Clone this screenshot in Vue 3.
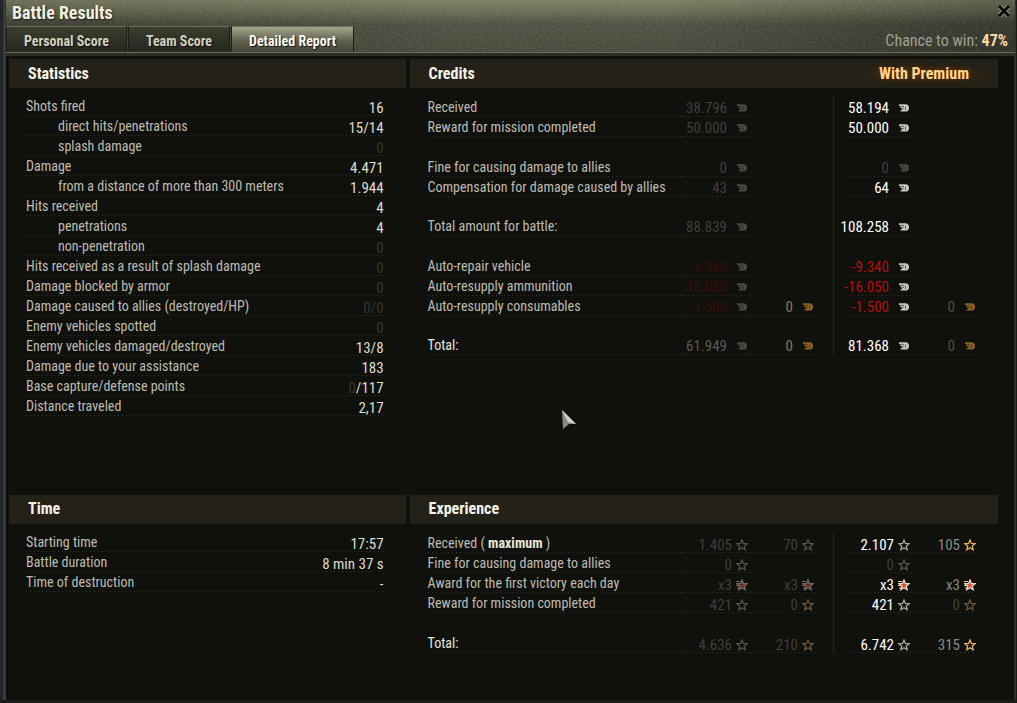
<script setup>
const tabs = [
  { id: 'personal', label: 'Personal Score' },
  { id: 'team', label: 'Team Score' },
  { id: 'detailed', label: 'Detailed Report' },
]
const activeTab = 'detailed'

const statistics = [
  { label: 'Shots fired', value: '16' },
  { label: 'direct hits/penetrations', value: '15/14', sub: true },
  { label: 'splash damage', dim: '0', sub: true },
  { label: 'Damage', value: '4.471' },
  { label: 'from a distance of more than 300 meters', value: '1.944', sub: true },
  { label: 'Hits received', value: '4' },
  { label: 'penetrations', value: '4', sub: true },
  { label: 'non-penetration', dim: '0', sub: true },
  { label: 'Hits received as a result of splash damage', dim: '0' },
  { label: 'Damage blocked by armor', dim: '0' },
  { label: 'Damage caused to allies (destroyed/HP)', dim: '0/0' },
  { label: 'Enemy vehicles spotted', dim: '0' },
  { label: 'Enemy vehicles damaged/destroyed', value: '13/8' },
  { label: 'Damage due to your assistance', value: '183' },
  { label: 'Base capture/defense points', dim: '0', value: '/117' },
  { label: 'Distance traveled', value: '2,17' },
]

const time = [
  { label: 'Starting time', value: '17:57' },
  { label: 'Battle duration', value: '8 min 37 s' },
  { label: 'Time of destruction', value: '-' },
]

const c = (text, tone, icon) => ({ text, tone, icon })

const credits = [
  { label: 'Received', cells: [c('38.796', 'faded', 'coin'), null, c('58.194', 'bright', 'coin'), null] },
  { label: 'Reward for mission completed', cells: [c('50.000', 'faded', 'coin'), null, c('50.000', 'bright', 'coin'), null] },
  { gap: 'group' },
  { label: 'Fine for causing damage to allies', cells: [c('0', 'faded', 'coin'), null, c('0', 'faded', 'coin'), null] },
  { label: 'Compensation for damage caused by allies', cells: [c('43', 'faded', 'coin'), null, c('64', 'bright', 'coin'), null] },
  { gap: 'total' },
  { label: 'Total amount for battle:', cells: [c('88.839', 'faded', 'coin'), null, c('108.258', 'bright', 'coin'), null] },
  { gap: 'group' },
  { label: 'Auto-repair vehicle', cells: [c('-9.340', 'loss-faded', 'coin'), null, c('-9.340', 'loss', 'coin'), null] },
  { label: 'Auto-resupply ammunition', cells: [c('-16.050', 'loss-faded', 'coin'), null, c('-16.050', 'loss', 'coin'), null] },
  { label: 'Auto-resupply consumables', cells: [c('-1.500', 'loss-faded', 'coin'), c('0', 'gold', 'gold-coin'), c('-1.500', 'loss', 'coin'), c('0', 'gold-faded', 'gold-coin')] },
  { gap: 'total' },
  { label: 'Total:', strong: true, cells: [c('61.949', 'muted', 'coin'), c('0', 'gold', 'gold-coin'), c('81.368', 'bright', 'coin'), c('0', 'gold-faded', 'gold-coin')] },
]

const experience = [
  { label: 'Received ( ', em: 'maximum', tail: ' )', cells: [c('1.405', 'faded', 'star'), c('70', 'faded', 'star'), c('2.107', 'bright', 'star'), c('105', 'plain', 'gold-star')] },
  { label: 'Fine for causing damage to allies', cells: [c('0', 'faded', 'star'), null, c('0', 'faded', 'star'), null] },
  { label: 'Award for the first victory each day', cells: [c('x3', 'faded', 'red-star'), c('x3', 'faded', 'red-star'), c('x3', 'bright', 'red-star'), c('x3', 'plain', 'red-star')] },
  { label: 'Reward for mission completed', cells: [c('421', 'faded', 'star'), c('0', 'faded', 'gold-star'), c('421', 'bright', 'star'), c('0', 'faded', 'gold-star')] },
  { gap: 'group' },
  { label: 'Total:', strong: true, cells: [c('4.636', 'faded', 'star'), c('210', 'faded', 'gold-star'), c('6.742', 'bright', 'star'), c('315', 'plain', 'gold-star')] },
]

const panels = [
  { title: 'Statistics', rows: statistics },
  { title: 'Credits', note: 'With Premium', kind: 'credits', rows: credits },
  { title: 'Time', rows: time },
  { title: 'Experience', kind: 'experience', rows: experience },
]
</script>

<template>
  <main class="window">
    <header class="top">
      <svg class="grain" aria-hidden="true">
        <filter id="brushed">
          <feTurbulence type="fractalNoise" baseFrequency="0.3 0.5" numOctaves="3" seed="4" />
          <feColorMatrix values="0 0 0 0 0.8  0 0 0 0 0.8  0 0 0 0 0.65  1.4 0 0 0 -0.45" />
        </filter>
        <rect width="100%" height="100%" filter="url(#brushed)" />
      </svg>
      <div class="titlebar">
        <h1>Battle Results</h1>
        <button class="close" type="button" aria-label="Close">
          <svg viewBox="0 0 14 14" width="14" height="14">
            <path d="M2.5 2.5 L11.5 11.5 M11.5 2.5 L2.5 11.5" stroke="#8f907e" stroke-width="5" />
            <path d="M2 2 L12 12 M12 2 L2 12" stroke="#0c0c08" stroke-width="3" />
          </svg>
        </button>
      </div>
      <div class="tabbar">
        <nav class="tabs">
          <button
            v-for="t in tabs"
            :key="t.id"
            type="button"
            class="tab"
            :class="{ active: t.id === activeTab }"
          >{{ t.label }}</button>
        </nav>
        <p class="chance">Chance to win: <strong>47%</strong></p>
      </div>
    </header>

    <div class="report">
      <section v-for="p in panels" :key="p.title" class="panel">
        <div class="panel-head">
          <h2>{{ p.title }}</h2>
          <span v-if="p.note" class="premium">{{ p.note }}</span>
        </div>

        <table v-if="!p.kind" class="stats">
          <tbody>
            <tr v-for="r in p.rows" :key="r.label" class="dotted">
              <th scope="row" :class="{ sub: r.sub }">{{ r.label }}</th>
              <td><span v-if="r.dim" class="dim">{{ r.dim }}</span>{{ r.value }}</td>
            </tr>
          </tbody>
        </table>

        <table v-else class="ledger" :class="p.kind">
          <colgroup>
            <col />
            <col class="w-main" />
            <col class="w-gold" />
            <col class="w-split" />
            <col class="w-prem" />
            <col class="w-gold" />
          </colgroup>
          <tbody>
            <tr v-for="(r, i) in p.rows" :key="i" :class="r.gap ? 'gap-' + r.gap : ''">
              <template v-if="r.gap">
                <td colspan="3"></td>
                <td class="split"></td>
                <td colspan="2"></td>
              </template>
              <template v-else>
                <th scope="row" class="line" :class="{ strong: r.strong }">{{ r.label }}<b v-if="r.em">{{ r.em }}</b>{{ r.tail }}</th>
                <template v-for="(v, j) in r.cells" :key="j">
                  <td v-if="j === 2" class="split"></td>
                  <td :class="{ line: v }">
                    <div v-if="v" class="amount" :class="[v.tone, { base: j < 2 }]">
                      <span>{{ v.text }}</span>
                      <svg v-if="v.icon.endsWith('coin')" class="icon" :class="v.icon" viewBox="0 0 12 12" width="12" height="12">
                        <path d="M1 2.2h6.5a3.3 3.5 0 0 1 0 7.4H2.5V8.2H4V7H3V5.4H2V4H1z" />
                        <path class="shade" d="M2 4.4h4 M3 6.4h3 M7.5 4.5v3.5" />
                      </svg>
                      <svg v-else class="icon" :class="v.icon" viewBox="0 0 12 12" width="12" height="12">
                        <path v-if="v.icon === 'red-star'" class="trail" d="M0 2.5h4 M1 4.5h4 M0 6.5h3 M1 9h3" />
                        <path class="outline" d="M6 1 L7.4 4.4 L11.1 4.7 L8.3 7.1 L9.2 10.7 L6 8.7 L2.8 10.7 L3.7 7.1 L.9 4.7 L4.6 4.4Z" />
                      </svg>
                    </div>
                  </td>
                </template>
              </template>
            </tr>
          </tbody>
        </table>
      </section>
    </div>

    <svg class="cursor" viewBox="0 0 17 22" width="17" height="22" aria-hidden="true">
      <path d="M2 1 L16 15 L9 15 L3 20Z" fill="#8a8a82" />
      <path d="M2 1 L16 15 L8 13Z" fill="#d4d4cc" />
    </svg>
  </main>
</template>

<style>
body {
  margin: 0;
  background: #10100c;
}
</style>

<style scoped>
.window {
  position: relative;
  box-sizing: border-box;
  min-height: 100vh;
  display: flex;
  flex-direction: column;
  padding-left: 6px;
  padding-right: 2px;
  border-bottom: 3px solid #1c1c18;
  background: linear-gradient(90deg, #20272a 0, #20272a 3px, #454a44 4px, #2a2d28 6px, #10100c 6px, #10100c calc(100% - 3px), #3a3d35 calc(100% - 2px), #10100c 100%);
  font-family: 'Roboto Condensed', 'Liberation Sans Narrow', 'Liberation Sans', sans-serif;
  font-size: 15px;
  line-height: 20px;
  color: #bebcb1;
}
h1, h2, p { margin: 0; }
.top {
  position: relative;
  border-bottom: 3px solid #2d2e25;
  background:
    linear-gradient(90deg, rgba(20, 21, 14, 0.15), rgba(130, 136, 110, 0.2) 45%, rgba(130, 136, 110, 0.2) 65%, rgba(20, 21, 14, 0.3)),
    linear-gradient(#7c7e63 0, #686a52 10px, #42433a 24px, #3a3b31 100%);
}
.grain {
  position: absolute;
  inset: 0;
  width: 100%;
  height: 100%;
  opacity: 0.12;
}
.titlebar, .tabbar {
  position: relative;
  display: flex;
  justify-content: space-between;
}
.titlebar {
  height: 26px;
  align-items: center;
  padding: 0 4px 0 6px;
}
h1 {
  font-size: 18px;
  line-height: 26px;
  color: #f1efe0;
  text-shadow: 1px 1px 2px #1a1a10;
}
.close {
  display: flex;
  padding: 0 0 4px;
  border: 0;
  background: none;
}
.tabbar {
  align-items: flex-end;
  border-bottom: 1px solid #6a6b5c;
}
.tabs { display: flex; gap: 1px; }
.tab {
  height: 26px;
  padding: 2px 17px 0;
  border: 1px solid #1c1d15;
  border-top-color: #6c6e58;
  border-bottom: 0;
  background: linear-gradient(#3c3e30, #25261d);
  font: inherit;
  font-size: 14px;
  font-weight: bold;
  color: #d3d1be;
  text-shadow: 1px 1px 1px #111;
}
.tab.active {
  background: linear-gradient(#a3a58b, #5b5d4b 60%, #45473a);
  color: #fbfaf0;
}
.chance {
  padding: 0 7px 1px 0;
  font-size: 16px;
  color: #a09f91;
}
.chance strong { color: #ffd9a6; }

.report {
  flex: 1;
  display: grid;
  grid-template-columns: 397fr 589fr;
  grid-template-rows: 435fr 205fr;
  column-gap: 4px;
  padding: 3px 17px 0 3px;
}
.panel-head {
  display: flex;
  justify-content: space-between;
  align-items: center;
  height: 29px;
  padding: 0 0 0 19px;
  background: #242118;
}
h2, .premium {
  font-size: 16px;
  line-height: 20px;
  font-weight: bold;
}
h2 { color: #f5f3e8; }
.premium {
  padding: 0 29px;
  color: #ffd68a;
  text-shadow: 0 0 6px #6a3000;
  background: radial-gradient(closest-side, rgba(130, 60, 0, 0.35), transparent);
}

table {
  border-collapse: collapse;
  table-layout: fixed;
}
th, td {
  box-sizing: border-box;
  height: 20px;
  padding: 0;
  font-weight: normal;
  text-align: left;
  line-height: 18px;
  white-space: nowrap;
}
th { font-size: 14px; }
.dotted, .line {
  background: repeating-linear-gradient(90deg, #35342c 0, #35342c 1px, transparent 1px, transparent 4px) left bottom / 100% 1px no-repeat;
}
.stats {
  width: calc(100% - 39px);
  margin: 8px 22px 0 17px;
}
.stats .sub { padding-left: 32px; }
.stats td {
  width: 80px;
  padding-top: 4px;
  line-height: 16px;
  text-align: right;
  color: #deddce;
}
.dim, .stats .dim { color: #35352f; }

.ledger {
  width: calc(100% - 38px);
  margin: 9px 20px 0 18px;
}
.w-main { width: 69px; }
.w-gold { width: 66px; }
.w-split { width: 34px; }
.w-prem { width: 62px; }
.split {
  background: linear-gradient(#26251f, #26251f) center / 1px 100% no-repeat;
}
.gap-group td { height: 20px; }
.gap-total td { height: 19px; }
.ledger b, .strong { color: #e8e6d8; }
.amount {
  display: flex;
  justify-content: flex-end;
  align-items: center;
  gap: 9px;
  padding: 2px 2px 0 0;
}
.experience .amount {
  gap: 4px;
  padding-top: 4px;
  line-height: 16px;
}
.faded { color: #403f39; }
.muted { color: #5b5a52; }
.bright { color: #ffffff; }
.plain { color: #8b8a80; }
.gold { color: #8a7a4e; }
.gold-faded { color: #5a4f33; }
.loss { color: #b50f0a; }
.loss-faded { color: #3c0c09; }

.icon { flex: none; fill: none; }
.coin { fill: #c9c8bd; }
.gold-coin { fill: #8a6324; }
.base .coin, .faded .coin { fill: #4a4942; }
.shade { stroke: #22211a; stroke-width: 0.6; }
.outline { stroke: #a9a89e; stroke-width: 1.3; }
.gold-star .outline { stroke: #e6b566; }
.red-star .outline { stroke: #f3d9c8; fill: #d0553f; }
.trail { stroke: #e9e4da; stroke-width: 0.9; }
.faded .icon:not(.coin) { opacity: 0.45; }

.cursor {
  position: absolute;
  left: 560px;
  top: 409px;
}
</style>
